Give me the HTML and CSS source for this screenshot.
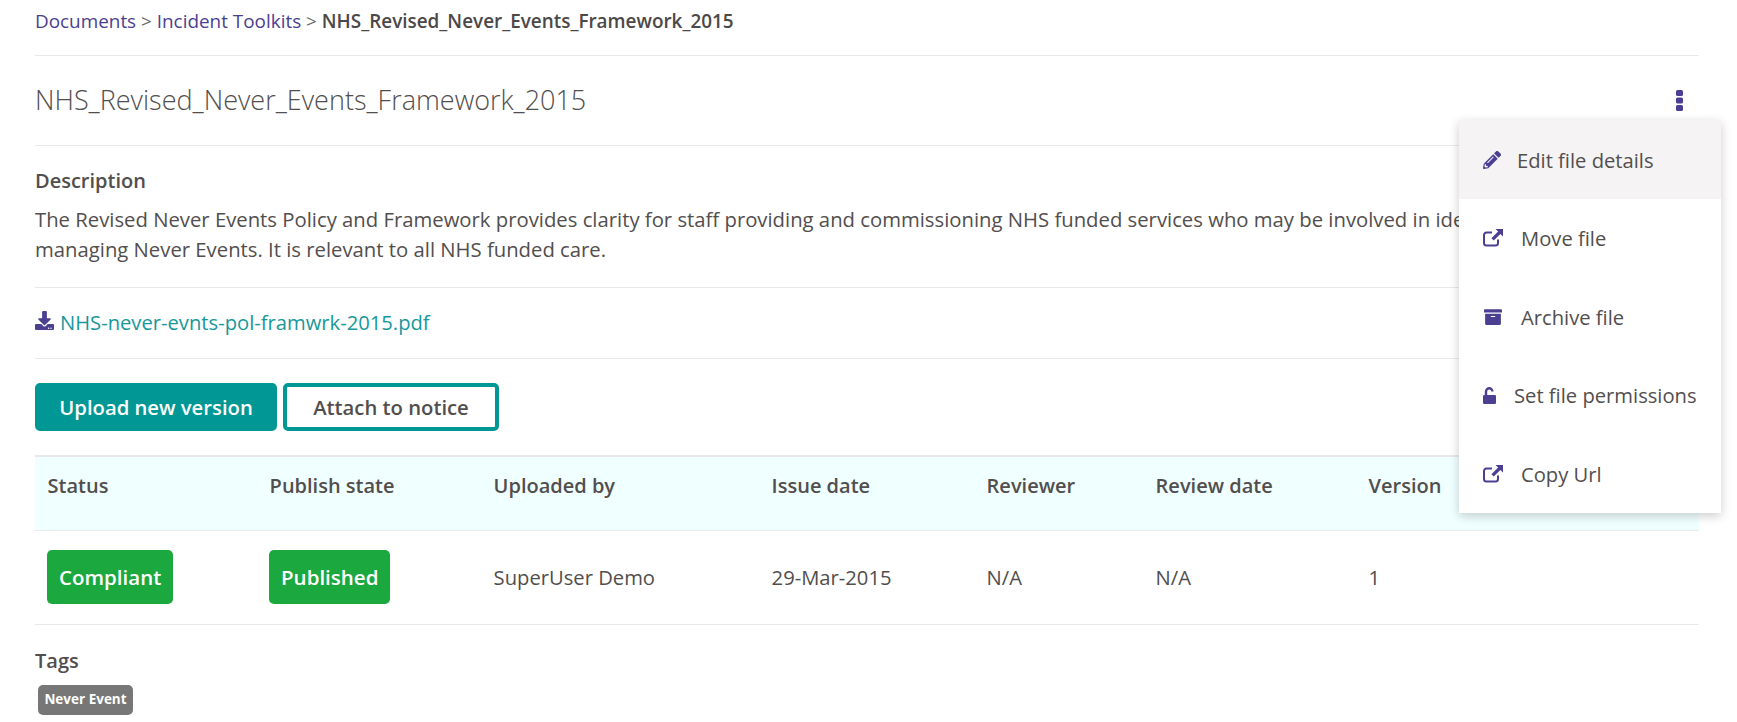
FILE: index.html
```html
<!DOCTYPE html>
<html lang="en">
<head>
<meta charset="utf-8">
<title>NHS_Revised_Never_Events_Framework_2015</title>
<link rel="stylesheet" href="styles.css">
</head>
<body>
<main class="page">
  <nav class="crumbs"><a href="#">Documents</a> &gt; <a href="#">Incident Toolkits</a> &gt; <strong>NHS_Revised_Never_Events_Framework_2015</strong></nav>
  <header class="head">
    <h1>NHS_Revised_Never_Events_Framework_2015</h1>
    <svg class="kebab" viewBox="0 0 7 21"><rect x="0" y="0" width="7" height="6" rx="1.5"/><rect x="0" y="7.5" width="7" height="6" rx="1.5"/><rect x="0" y="15" width="7" height="6" rx="1.5"/></svg>
  </header>
  <section class="desc">
    <h2>Description</h2>
    <p>The Revised Never Events Policy and Framework provides clarity for staff providing and commissioning NHS funded services who may be involved in identifying, reporting and managing Never Events. It is relevant to all NHS funded care.</p>
  </section>
  <div class="file">
    <svg class="ico-dl" viewBox="0 0 512 512"><path d="M216 0h80c13.3 0 24 10.7 24 24v168h87.7c17.8 0 26.7 21.5 14.1 34.1L269.7 378.3c-7.5 7.5-19.8 7.5-27.3 0L90.1 226.1c-12.6-12.6-3.7-34.1 14.1-34.1H192V24c0-13.3 10.7-24 24-24zm296 376v112c0 13.3-10.7 24-24 24H24c-13.3 0-24-10.7-24-24V376c0-13.3 10.7-24 24-24h146.7l49 49c20.1 20.1 52.5 20.1 72.6 0l49-49H488c13.3 0 24 10.7 24 24zm-124 88c0-11-9-20-20-20s-20 9-20 20 9 20 20 20 20-9 20-20zm64 0c0-11-9-20-20-20s-20 9-20 20 9 20 20 20 20-9 20-20z"/></svg>
    <a href="#">NHS-never-evnts-pol-framwrk-2015.pdf</a>
  </div>
  <div class="actions">
    <button class="btn btn-fill">Upload new version</button>
    <button class="btn btn-line">Attach to notice</button>
  </div>
  <section class="grid">
    <div class="row row-head">
      <div>Status</div><div>Publish state</div><div>Uploaded by</div><div>Issue date</div><div>Reviewer</div><div>Review date</div><div>Version</div>
    </div>
    <div class="row row-body">
      <div><span class="pill">Compliant</span></div><div><span class="pill">Published</span></div><div class="cell-text">SuperUser Demo</div><div class="cell-text">29-Mar-2015</div><div class="cell-text">N/A</div><div class="cell-text">N/A</div><div class="cell-text">1</div>
    </div>
  </section>
  <section class="tags">
    <h2>Tags</h2>
    <span class="tag">Never Event</span>
  </section>
</main>
<ul class="menu">
  <li class="active"><svg class="ico w18" viewBox="0 0 512 512"><path d="M497.9 142.1l-46.1 46.1c-4.7 4.7-12.3 4.7-17 0l-111-111c-4.7-4.7-4.7-12.3 0-17l46.1-46.1c18.7-18.7 49.1-18.7 67.9 0l60.1 60.1c18.8 18.7 18.8 49.1 0 67.9zM284.2 99.8L21.6 362.4.4 483.9c-2.9 16.4 11.4 30.6 27.8 27.8l121.5-21.3 262.6-262.6c4.7-4.7 4.7-12.3 0-17l-111-111c-4.8-4.7-12.4-4.7-17.1 0zM124.1 339.9c-5.5-5.5-5.5-14.3 0-19.8l154-154c5.5-5.5 14.3-5.5 19.8 0s5.5 14.3 0 19.8l-154 154c-5.5 5.5-14.3 5.5-19.8 0zM88 424h48v36.3l-64.5 11.3-31.1-31.1L51.7 376H88v48z"/></svg>Edit file details</li>
  <li><svg class="ico w20" viewBox="0 0 20 18"><path class="ln" d="M15 10.5V14a2.5 2.5 0 0 1-2.500 2.500H3.500A2.500 2.500 0 0 1 1 14V6a2.500 2.500 0 0 1 2.500-2.500H9"/><path d="M12.500 0H20v7.500l-2.600-2.600-6.700 6.700-2.300-2.300 6.700-6.700z"/></svg>Move file</li>
  <li><svg class="ico w20" viewBox="0 0 512 512"><path d="M32 448c0 17.700 14.300 32 32 32h384c17.700 0 32-14.300 32-32V160H32v288zm160-212c0-6.600 5.400-12 12-12h104c6.600 0 12 5.400 12 12v8c0 6.600-5.400 12-12 12H204c-6.600 0-12-5.400-12-12v-8zM480 32H32C14.300 32 0 46.300 0 64v48c0 8.800 7.200 16 16 16h480c8.800 0 16-7.200 16-16V64c0-17.700-14.300-32-32-32z"/></svg>Archive file</li>
  <li><svg class="ico w13" viewBox="0 0 13 17"><path class="ln lock" d="M3 8V4.500a3.200 3.200 0 0 1 6.400 0"/><rect x="0" y="8" width="13" height="9" rx="1.200"/></svg>Set file permissions</li>
  <li><svg class="ico w20" viewBox="0 0 20 18"><path class="ln" d="M15 10.500V14a2.500 2.500 0 0 1-2.500 2.500H3.500A2.500 2.500 0 0 1 1 14V6a2.500 2.500 0 0 1 2.500-2.500H9"/><path d="M12.500 0H20v7.500l-2.600-2.600-6.700 6.700-2.300-2.300 6.700-6.700z"/></svg>Copy Url</li>
</ul>
</body>
</html>
```
FILE: styles.css
```css
* { box-sizing: border-box; }
html, body { margin: 0; padding: 0; }
body {
  font-family: "Open Sans", sans-serif;
  font-size: 20.200px;
  line-height: 30px;
  color: #524e4e;
  background: #fff;
  overflow: hidden;
  height: 722px;
  position: relative;
}
.page { padding: 0 38px 0 35px; }
h1, h2, p { margin: 0; }
a { color: #4b3f92; text-decoration: none; }

.crumbs { height: 56px; padding-top: 6px; border-bottom: 1px solid #e9e9e9; color: #666; font-size: 18.900px; }
.crumbs strong { font-weight: 600; color: #4c4848; }

.head {
  height: 90px;
  display: flex;
  align-items: center;
  justify-content: space-between;
  border-bottom: 1px solid #e9e9e9;
  padding-right: 16px;
}
h1 { font-size: 27px; font-weight: 300; line-height: 36px; margin-top: -2px; }
.kebab { width: 7px; height: 21px; fill: #4b3f92; }

.desc { height: 142px; padding-top: 20px; border-bottom: 1px solid #e9e9e9; }
h2 { font-size: 20px; font-weight: 600; line-height: 30px; }
.desc p { margin-top: 8px; font-size: 20.300px; }

.file {
  height: 71px;
  display: flex;
  align-items: center;
  gap: 6px;
  border-bottom: 1px solid #e9e9e9;
  padding-bottom: 2px;
}
.file a { color: #17989a; }
.ico-dl { width: 19px; height: 19px; fill: #4b3f92; margin-top: -3px; }

.actions { display: flex; gap: 6px; padding-top: 24px; height: 96px; }
.btn {
  font-family: inherit;
  font-size: 20.250px;
  font-weight: 600;
  height: 48px;
  border-radius: 5px;
  border: 4px solid #009794;
  padding: 0;
}
.btn-fill { width: 242px; background: #009794; color: #fff; }
.btn-line { width: 216px; background: #fff; color: #524e4e; }

.grid { border-top: 2px solid #e9e9e9; }
.row {
  display: grid;
  grid-template-columns: 222px 224px 278px 215px 169px 213px 343px;
  align-items: center;
  border-bottom: 1px solid #e9e9e9;
}
.row > div { padding-left: 12.600px; }
.row-head { height: 74px; background: #f0ffff; font-weight: 600; padding-bottom: 16px; font-size: 20px; }
.row-body { height: 94px; padding-bottom: 2px; }
.row-body > div:nth-child(-n+2) { padding-left: 12px; }
.row-body > .cell-text { padding-top: 1px; }
.pill {
  display: inline-block;
  height: 54px;
  line-height: 54px;
  padding: 0 12px;
  background: #1ba83f;
  color: #fff;
  font-weight: 600;
  font-size: 20.500px;
  border-radius: 5px;
  vertical-align: middle;
}

.tags { padding-top: 21px; }
.tag {
  display: block;
  width: 95px;
  height: 30px;
  margin: 9px 0 0 3px;
  background: #777;
  color: #fff;
  font-size: 13.500px;
  font-weight: 700;
  line-height: 29px;
  text-align: center;
  border-radius: 5px;
}

.menu {
  position: absolute;
  top: 120px;
  left: 1459px;
  width: 262px;
  margin: 0;
  padding: 0;
  list-style: none;
  background: #fff;
  box-shadow: 0 3px 10px rgba(0, 0, 0, 0.2);
}
.menu li {
  height: 78.600px;
  display: flex;
  align-items: center;
  gap: 18px;
  padding: 0.600px 0 0 24px;
  white-space: nowrap;
}
.menu li.active { background: #f5f3f4; }
.ico { fill: #4b3f92; flex: none; }
.ico .ln { fill: none; stroke: #4b3f92; stroke-width: 2; }
.ico .lock { stroke-width: 2.400; }
.w18 { width: 18px; height: 18px; margin-right: -2px; }
.w20 { width: 20px; height: 18px; }
.w13 { width: 13px; height: 17px; }
```
